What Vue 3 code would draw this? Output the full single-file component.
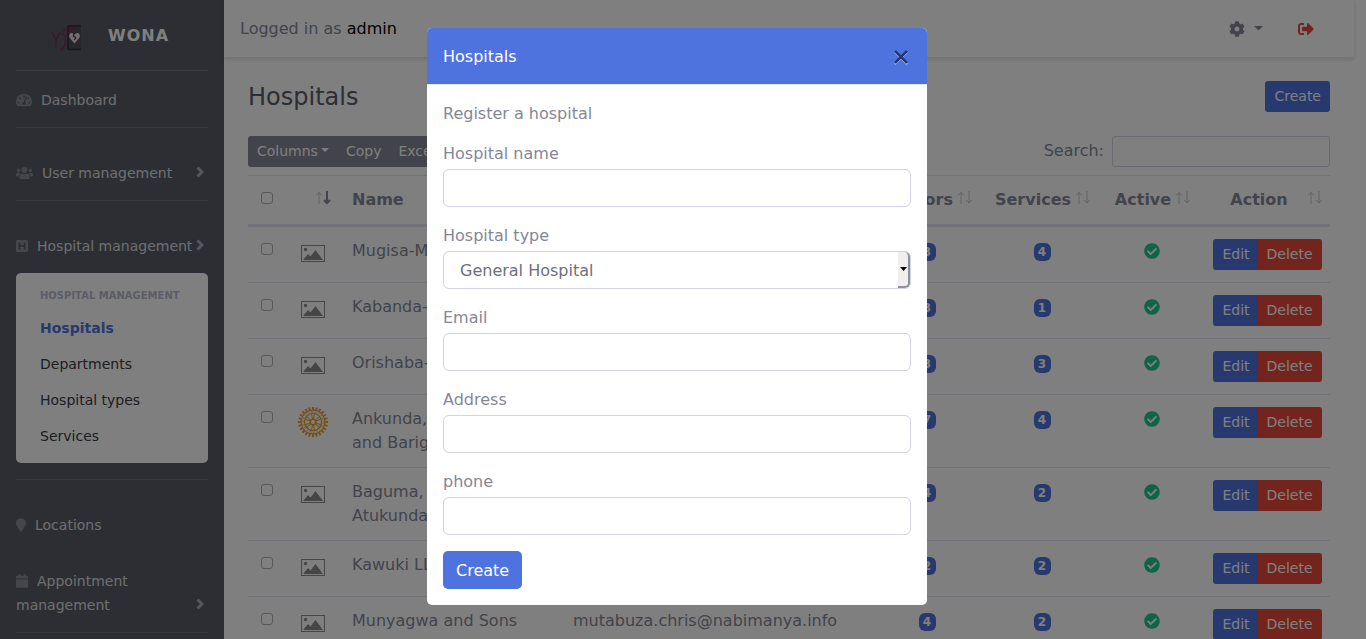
<script setup>
import { ref } from 'vue'

const icons = {
  dashboard: { box: '0 32 576 448', w: 16, d: 'M288 32C128.94 32 0 160.94 0 320c0 52.8 14.25 102.26 39.06 144.8 5.61 9.62 16.3 15.2 27.44 15.2h443c11.14 0 21.83-5.58 27.44-15.2C561.75 422.26 576 372.8 576 320c0-159.06-128.94-288-288-288zm0 64c14.71 0 26.58 10.13 30.32 23.65-1.11 2.26-2.64 4.23-3.45 6.67l-9.22 27.67c-5.13 3.49-10.97 6.01-17.64 6.01-17.67 0-32-14.33-32-32S270.33 96 288 96zM96 384c-17.67 0-32-14.33-32-32s14.33-32 32-32 32 14.33 32 32-14.33 32-32 32zm48-160c-17.67 0-32-14.33-32-32s14.33-32 32-32 32 14.33 32 32-14.33 32-32 32zm246.77-72.41l-61.33 184C343.13 347.33 352 364.54 352 384c0 11.72-3.38 22.55-8.88 32H232.88c-5.5-9.45-8.88-20.28-8.88-32 0-33.94 26.5-61.43 59.9-63.59l61.34-184.01c4.17-12.56 17.73-19.45 30.36-15.17 12.57 4.19 19.35 17.79 15.17 30.36zm14.66 57.2l15.52-46.55c3.47-1.29 7.13-2.23 11.05-2.23 17.67 0 32 14.33 32 32s-14.33 32-32 32c-11.38-.01-20.89-6.28-26.57-15.22zM480 384c-17.67 0-32-14.33-32-32s14.33-32 32-32 32 14.33 32 32-14.33 32-32 32z' },
  users: { box: '0 0 640 512', w: 17, d: 'M96 224c35.3 0 64-28.7 64-64s-28.7-64-64-64-64 28.7-64 64 28.7 64 64 64zm448 0c35.3 0 64-28.7 64-64s-28.7-64-64-64-64 28.7-64 64 28.7 64 64 64zm32 32h-64c-17.6 0-33.5 7.1-45.1 18.6 40.3 22.1 68.9 62 75.1 109.4h66c17.7 0 32-14.3 32-32v-32c0-35.3-28.7-64-64-64zm-256 0c61.9 0 112-50.1 112-112S381.9 32 320 32 208 82.1 208 144s50.1 112 112 112zm76.8 32h-8.3c-20.8 10-43.9 16-68.5 16s-47.6-6-68.5-16h-8.3C179.6 288 128 339.6 128 403.2V432c0 26.5 21.5 48 48 48h288c26.5 0 48-21.5 48-48v-28.8c0-63.6-51.6-115.2-115.2-115.2zm-223.7-13.4C161.5 263.1 145.6 256 128 256H64c-35.3 0-64 28.7-64 64v32c0 17.7 14.3 32 32 32h65.9c6.3-47.4 34.9-87.3 75.2-109.4z' },
  hospital: { box: '0 0 448 512', w: 12, d: 'M448 80v352c0 26.51-21.49 48-48 48H48c-26.51 0-48-21.49-48-48V80c0-26.51 21.49-48 48-48h352c26.51 0 48 21.49 48 48zm-112 48h-32c-8.837 0-16 7.163-16 16v80H160v-80c0-8.837-7.163-16-16-16h-32c-8.837 0-16 7.163-16 16v224c0 8.837 7.163 16 16 16h32c8.837 0 16-7.163 16-16v-80h128v80c0 8.837 7.163 16 16 16h32c8.837 0 16-7.163 16-16V144c0-8.837-7.163-16-16-16z' },
  marker: { box: '0 0 384 512', w: 10, d: 'M172.268 501.67C26.97 291.031 0 269.413 0 192 0 85.961 85.961 0 192 0s192 85.961 192 192c0 77.413-26.97 99.031-172.268 309.67-9.535 13.774-29.93 13.773-39.464 0z' },
  calendar: { box: '0 0 448 512', w: 12, d: 'M12 192h424c6.6 0 12 5.4 12 12v260c0 26.5-21.5 48-48 48H48c-26.5 0-48-21.5-48-48V204c0-6.6 5.4-12 12-12zm436-44v-36c0-26.5-21.5-48-48-48h-48V12c0-6.6-5.4-12-12-12h-40c-6.6 0-12 5.4-12 12v52H160V12c0-6.6-5.4-12-12-12h-40c-6.6 0-12 5.4-12 12v52H48c-26.5 0-48 21.5-48 48v36c0 6.6 5.4 12 12 12h424c6.6 0 12-5.4 12-12z' }
}

const menu = [
  { label: 'Dashboard', icon: icons.dashboard, ruled: true, tight: true },
  { label: 'User management', icon: icons.users, ruled: true, more: true },
  { label: 'Hospital management', icon: icons.hospital, ruled: true, more: true, open: true },
  { label: 'Locations', icon: icons.marker, ruled: true },
  { label: 'Appointment management', icon: icons.calendar, more: true }
]
const submenu = ['Hospitals', 'Departments', 'Hospital types', 'Services']

const rows = [
  { name: 'Mugisa-M', email: '', doctors: 3, services: 4 },
  { name: 'Kabanda-', email: '', doctors: 3, services: 1 },
  { name: 'Orishaba-', email: '', doctors: 3, services: 3 },
  { name: 'Ankunda,\nand Barig', email: '', doctors: 7, services: 4, wheel: true },
  { name: 'Baguma,\nAtukunda', email: '', doctors: 4, services: 2 },
  { name: 'Kawuki LL', email: '', doctors: 2, services: 2 },
  { name: 'Munyagwa and Sons', email: 'mutabuza.chris@nabimanya.info', doctors: 4, services: 2 }
]
const teeth = Array.from({ length: 24 }, (_, i) => i * 15)
const spokes = [0, 60, 120, 180, 240, 300]

const form = ref({ name: '', type: 'General Hospital', email: '', address: '', phone: '' })
const search = ref('')
</script>

<template>
  <div class="shell">
    <nav class="sidebar" aria-label="Main">
      <a class="brand" href="#">
        <svg class="logo" width="32" height="28" viewBox="0 0 32 28" aria-hidden="true">
          <rect x="16" y="1" width="13" height="25" rx="1" fill="#4c4e5a" />
          <path d="M16 2h13M16 25.500h13M16 2v23" fill="none" stroke="#30313a" stroke-width="1.600" />
          <g fill="none" stroke="#8a2457" stroke-width="1.300">
            <path d="M0 8l4 8 4-8M4 16v8" />
            <path d="M10 9q5 3 3 11-1 4-4 6" />
            <path d="M11 7q5-5 13-2" />
            <path d="M14 11q2-4 6-4" />
          </g>
          <path d="M22.500 19.500l-4.700-5.500q-1.500-3 .6-4.800 2.400-1 4.100 1.200 1.700-2.200 4.100-1.200 2.100 1.800.6 4.800z" fill="#dcdce2" />
          <path d="M22.500 9l-1.200 3 2.400 1.500-1.200 2.500" fill="none" stroke="#6a2a50" stroke-width="1.200" />
        </svg>
        <span>WONA</span>
      </a>
      <template v-for="item in menu" :key="item.label">
        <hr v-if="item.ruled" :class="{ spaced: !item.tight }">
        <a class="nav-link" href="#">
          <span class="nav-text"><svg class="nav-icon" :width="item.icon.w" height="14" :viewBox="item.icon.box" aria-hidden="true"><path :d="item.icon.d" /></svg>{{ item.label }}</span>
          <svg v-if="item.more" class="chevron" width="8" height="12" viewBox="0 0 8 12" aria-hidden="true"><path d="M1.500 1.500L6 6l-4.500 4.500" /></svg>
        </a>
        <div v-if="item.open" class="submenu">
          <h6>Hospital management</h6>
          <a v-for="(s, i) in submenu" :key="s" href="#" :class="{ active: i === 0 }">{{ s }}</a>
        </div>
      </template>
      <hr>
    </nav>

    <div class="content">
      <header class="topbar">
        <span>Logged in as <b>admin</b></span>
        <div class="top-actions">
          <button class="plain" type="button" aria-label="Settings">
            <svg width="16" height="16" viewBox="0 0 512 512" aria-hidden="true"><path fill="#858796" d="M487.4 315.7l-42.600-24.600c4.300-23.200 4.300-47 0-70.200l42.600-24.600c4.900-2.800 7.100-8.600 5.500-14-11.100-35.600-30-67.800-54.700-94.600-3.800-4.100-10-5.100-14.800-2.300L380.800 110c-17.900-15.400-38.500-27.300-60.800-35.100V25.800c0-5.600-3.900-10.500-9.400-11.700-36.700-8.200-74.300-7.800-109.200 0-5.500 1.200-9.400 6.100-9.400 11.700V75c-22.200 7.900-42.800 19.800-60.800 35.100L88.700 85.500c-4.900-2.800-11-1.900-14.800 2.300-24.700 26.700-43.600 58.900-54.700 94.600-1.700 5.400.6 11.200 5.500 14L67.300 221c-4.300 23.200-4.300 47 0 70.200l-42.600 24.600c-4.900 2.800-7.100 8.600-5.500 14 11.100 35.600 30 67.800 54.700 94.600 3.800 4.100 10 5.100 14.800 2.300l42.600-24.600c17.900 15.400 38.500 27.300 60.800 35.100v49.200c0 5.600 3.900 10.500 9.400 11.700 36.700 8.200 74.300 7.800 109.200 0 5.500-1.200 9.400-6.100 9.400-11.700v-49.200c22.200-7.900 42.800-19.800 60.800-35.100l42.600 24.600c4.900 2.800 11 1.900 14.800-2.300 24.700-26.700 43.600-58.900 54.700-94.600 1.500-5.500-.7-11.300-5.600-14.100zM256 336c-44.100 0-80-35.900-80-80s35.900-80 80-80 80 35.900 80 80-35.900 80-80 80z" /></svg>
            <svg width="9" height="5" viewBox="0 0 9 5" aria-hidden="true"><path fill="#858796" d="M0 0h9L4.500 4.500z" /></svg>
          </button>
          <a href="#" aria-label="Log out">
            <svg width="16" height="16" viewBox="0 0 512 512" aria-hidden="true"><path fill="#e74a3b" d="M497 273L329 441c-15 15-41 4.500-41-17v-96H152c-13.300 0-24-10.700-24-24v-96c0-13.300 10.700-24 24-24h136V88c0-21.400 25.900-32 41-17l168 168c9.300 9.400 9.300 24.600 0 34zM192 436v-40c0-6.600-5.400-12-12-12H96c-17.700 0-32-14.300-32-32V160c0-17.700 14.300-32 32-32h84c6.600 0 12-5.400 12-12V76c0-6.600-5.400-12-12-12H96c-53 0-96 43-96 96v192c0 53 43 96 96 96h84c6.600 0 12-5.400 12-12z" /></svg>
          </a>
        </div>
      </header>

      <main>
        <div class="page-head">
          <h1>Hospitals</h1>
          <button class="btn-sm primary" type="button">Create</button>
        </div>
        <div class="tools">
          <div class="group">
            <button class="btn-sm grey" type="button">Columns<svg class="caret" width="8" height="4" viewBox="0 0 8 4" aria-hidden="true"><path fill="#fff" d="M0 0h8L4 4z" /></svg></button>
            <button class="btn-sm grey" type="button">Copy</button>
            <button class="btn-sm grey" type="button">Excel</button>
          </div>
          <label class="search">Search:<input v-model="search" type="search"></label>
        </div>

        <table>
          <colgroup>
            <col class="c-check"><col class="c-img"><col class="c-name"><col><col class="c-doc"><col class="c-serv"><col class="c-act"><col class="c-btn">
          </colgroup>
          <thead>
            <tr>
              <th><input type="checkbox" aria-label="Select all"></th>
              <th class="sorted"><svg class="sort" width="16" height="14" viewBox="0 0 16 14" aria-label="Sort"><path class="up" d="M4 13V1.500M1 4.500l3-3 3 3" /><path class="down" d="M12 0v11.500M9 9l3 3 3-3" /></svg></th>
              <th class="left">Name</th>
              <th class="left">Email</th>
              <th v-for="h in ['Doctors', 'Services', 'Active']" :key="h" class="sortable">
                <span class="head">{{ h }}<svg class="sort" width="16" height="14" viewBox="0 0 16 14" aria-hidden="true"><path class="up" d="M4 13V1.500M1 4.500l3-3 3 3" /><path class="up" d="M12 0v11.500M9 9l3 3 3-3" /></svg></span>
              </th>
              <th class="action">
                <span class="head"><span>Action</span><svg class="sort" width="16" height="14" viewBox="0 0 16 14" aria-hidden="true"><path class="up" d="M4 13V1.500M1 4.500l3-3 3 3" /><path class="up" d="M12 0v11.500M9 9l3 3 3-3" /></svg></span>
              </th>
            </tr>
          </thead>
          <tbody>
            <tr v-for="r in rows" :key="r.name">
              <td><input type="checkbox" :aria-label="'Select ' + r.name"></td>
              <td class="pic">
                <svg v-if="r.wheel" width="30" height="30" viewBox="-15 -15 30 30" aria-hidden="true">
                  <g fill="#e8a034">
                    <rect v-for="t in teeth" :key="t" x="-1" y="-15" width="2" height="3" :transform="`rotate(${t})`" />
                  </g>
                  <g fill="none" stroke="#e8a034">
                    <circle r="11.800" stroke-width="1.200" />
                    <circle r="8.600" stroke-width="1.300" />
                    <circle r="2.800" stroke-width="1.600" />
                    <path v-for="s in spokes" :key="s" d="M-.5-3L-1.500-8.500M.5-3l1-5.500" stroke-width="1" :transform="`rotate(${s})`" />
                  </g>
                  <circle r="10.200" fill="none" stroke="#e8a034" stroke-width=".8" stroke-dasharray="2 1.500" />
                </svg>
                <svg v-else class="photo" width="24" height="17" viewBox="0 0 24 17" aria-hidden="true">
                  <rect x=".5" y=".5" width="23" height="16" fill="none" stroke="#8c8c8c" />
                  <circle cx="4.500" cy="4.500" r="1.700" fill="#8c8c8c" />
                  <path d="M2 15l5-6 2.500 2.500L14.500 5 22 15z" fill="#8c8c8c" />
                </svg>
              </td>
              <td class="left name">{{ r.name }}</td>
              <td class="left">{{ r.email }}</td>
              <td><span class="badge">{{ r.doctors }}</span></td>
              <td><span class="badge">{{ r.services }}</span></td>
              <td><svg class="check" width="16" height="16" viewBox="0 0 512 512" role="img" aria-label="Active"><path fill="#1cc88a" d="M504 256c0 136.967-111.033 248-248 248S8 392.967 8 256 119.033 8 256 8s248 111.033 248 248zM227.314 387.314l184-184c6.248-6.248 6.248-16.379 0-22.627l-22.627-22.627c-6.248-6.249-16.379-6.249-22.628 0L216 308.118l-70.059-70.059c-6.248-6.248-16.379-6.248-22.628 0l-22.627 22.627c-6.248 6.248-6.248 16.379 0 22.627l104 104c6.249 6.249 16.379 6.249 22.628.001z" /></svg></td>
              <td class="action">
                <div class="group">
                  <button class="btn-sm primary" type="button">Edit</button>
                  <button class="btn-sm danger" type="button">Delete</button>
                </div>
              </td>
            </tr>
          </tbody>
        </table>
      </main>
    </div>

    <div class="backdrop">
      <section class="modal" role="dialog" aria-labelledby="modal-title">
        <header class="modal-head">
          <h2 id="modal-title">Hospitals</h2>
          <button class="plain" type="button" aria-label="Close">
            <svg width="16" height="16" viewBox="0 0 16 16" aria-hidden="true"><path d="M2 3l12 12m0-12L2 15" stroke="#dfe7fb" stroke-width="1.800" /><path d="M2 2l12 12M14 2L2 14" stroke="#243a78" stroke-width="2.600" /></svg>
          </button>
        </header>
        <form class="modal-body" @submit.prevent>
          <p>Register a hospital</p>
          <div class="field"><label for="f-name">Hospital name</label><input id="f-name" v-model="form.name" type="text"></div>
          <div class="field">
            <label for="f-type">Hospital type</label>
            <div class="select">
              <select id="f-type" v-model="form.type"><option>General Hospital</option></select>
              <span class="drop"><svg width="7" height="4" viewBox="0 0 7 4" aria-hidden="true"><path d="M0 0h7L3.500 4z" /></svg></span>
            </div>
          </div>
          <div class="field"><label for="f-email">Email</label><input id="f-email" v-model="form.email" type="email"></div>
          <div class="field"><label for="f-address">Address</label><input id="f-address" v-model="form.address" type="text"></div>
          <div class="field"><label for="f-phone">phone</label><input id="f-phone" v-model="form.phone" type="text"></div>
          <button class="submit" type="submit">Create</button>
        </form>
      </section>
    </div>
  </div>
</template>

<style>
body { margin: 0; background: #fff; }
</style>

<style scoped>
* { box-sizing: border-box; }
.shell {
  display: flex;
  height: 100vh;
  overflow: hidden;
  padding-right: 12px;
  font: 16px/24px "DejaVu Sans", sans-serif;
  color: #858796;
}
button, input, select { font: inherit; color: inherit; }
button { cursor: pointer; }
a { text-decoration: none; }
.plain { display: flex; align-items: center; gap: 9px; padding: 0; border: 0; background: none; }

.sidebar { flex: 0 0 224px; background: #5a5c69; font-size: 14px; }
.brand {
  display: flex;
  align-items: center;
  height: 70px;
  padding: 2px 0 0 52px;
  gap: 24px;
  color: #fff;
  font-size: 16px;
  font-weight: 700;
  letter-spacing: 1px;
}
.logo { margin-top: 4px; }
hr { height: 1px; margin: 0 16px; border: 0; background: rgba(255, 255, 255, .15); }
hr.spaced { margin-bottom: 16px; }
.nav-link { display: flex; align-items: flex-end; padding: 17px 16px 15px; color: rgba(255, 255, 255, .8); }
.nav-text { flex: 1; }
.nav-icon { margin-right: 9px; vertical-align: -2px; fill: rgba(255, 255, 255, .3); }
.chevron { margin: 0 4px 7px 0; fill: none; stroke: rgba(255, 255, 255, .5); stroke-width: 3; }
.submenu { margin: 0 16px 16px; padding: 8px 8px 9px; border-radius: 5px; background: #fff; }
.submenu h6 { margin: 0; padding: 3px 16px 2px; font-size: 10px; font-weight: 700; color: #b7b9cc; text-transform: uppercase; white-space: nowrap; }
.submenu a { display: block; padding: 6px 16px; color: #3a3b45; }
.submenu a.active { color: #4e73df; font-weight: 700; }

.content { flex: 1; min-width: 0; }
.topbar {
  display: flex;
  align-items: center;
  justify-content: space-between;
  height: 57px;
  padding: 0 40px 0 16px;
  box-shadow: 0 2px 4px rgba(58, 59, 69, .18);
}
.topbar b { font-weight: 400; color: #000; }
.top-actions { display: flex; align-items: center; gap: 35px; }
.top-actions a { display: flex; }
main { padding: 24px 24px 0; }
.page-head, .tools { display: flex; align-items: flex-start; justify-content: space-between; }
.page-head { margin-bottom: 23px; }
h1 { margin: 0; padding-top: 1px; font-size: 24px; line-height: 31px; font-weight: 400; color: #5a5c69; }
.btn-sm { height: 31px; padding: 0 9px; border: 0; border-radius: 3px; font-size: 14px; line-height: 21px; color: #fff; }
.primary { background: #4e73df; }
.danger { background: #e74a3b; }
.grey { background: #858796; }
.caret { margin-left: 3px; vertical-align: 4px; }
.group { display: inline-flex; vertical-align: top; }
.group .btn-sm:not(:last-child) { border-top-right-radius: 0; border-bottom-right-radius: 0; }
.group .btn-sm:not(:first-child) { margin-left: -1px; border-top-left-radius: 0; border-bottom-left-radius: 0; }
.search { display: flex; align-items: flex-start; gap: 8px; line-height: 29px; }
.search input { width: 218px; height: 31px; border: 1px solid #d1d3e2; border-radius: 3px; background: #fff; }

table { width: 100%; margin-top: 8px; table-layout: fixed; border-collapse: separate; border-spacing: 0; }
.c-check { width: 38px; }
.c-img { width: 54px; }
.c-name { width: 221px; }
.c-doc { width: 116px; }
.c-serv { width: 114px; }
.c-act { width: 106px; }
.c-btn { width: 125px; }
th, td { padding: 12px 0; border-top: 1px solid #e3e6f0; text-align: center; vertical-align: top; }
th { border-bottom: 2px solid #e3e6f0; }
th.sortable { padding-left: 2px; }
.left { padding-left: 12px; padding-right: 12px; text-align: left; }
.name { white-space: pre-line; }
.action { padding-left: 8px; padding-right: 8px; }
th.action { padding-right: 7px; padding-left: 6px; }
th.sorted { text-align: right; padding-right: 9px; }
.head { display: inline-flex; gap: 4px; }
.action .head { display: flex; gap: 0; }
.action .head span { flex: 1; }
.sort { margin-top: 3px; fill: none; stroke-width: 1; }
.sort .up { stroke: #c3c4cc; }
.sort .down { stroke: #858796; stroke-width: 2; }
input[type="checkbox"] { appearance: none; width: 12px; height: 12px; margin: 4px 0 0; border: 1px solid #b0b0b0; border-radius: 3px; background: #fff; vertical-align: top; }
.pic { line-height: 0; }
.photo { margin-top: 6px; }
.badge { display: inline-block; min-width: 17px; padding: 0 4px; border-radius: 6px; background: #4e73df; color: #fff; font-size: 12px; line-height: 18px; font-weight: 700; }
.check { vertical-align: -3px; }

.backdrop { position: fixed; inset: 0; padding: 28px 12px 0 0; background: rgba(0, 0, 0, .5); }
.modal { width: 500px; margin: 0 auto; border-radius: 5px; overflow: hidden; background: #fff; }
.modal-head { display: flex; align-items: center; justify-content: space-between; padding: 17px 18px 15px 16px; border-bottom: 1px solid #e3e6f0; background: #4e73df; color: #fff; }
h2 { margin: 0; font-size: 16px; font-weight: 400; }
.modal-body { padding: 17px 16px 16px; }
p { margin: 0 0 16px; }
.field { margin-bottom: 17px; }
.field:last-of-type { margin-bottom: 16px; }
.field label { display: block; margin-bottom: 3px; }
.field input, .field select {
  display: block;
  width: 100%;
  height: 38px;
  padding: 6px 12px;
  border: 1px solid #d1d3e2;
  border-radius: 6px;
  background: #fff;
  color: #6e707e;
}
.select { position: relative; }
.field select { appearance: none; padding: 2px 16px 0; }
.drop {
  position: absolute;
  top: 1px;
  right: 1px;
  bottom: 1px;
  display: flex;
  align-items: center;
  justify-content: center;
  width: 12px;
  border-right: 2px solid #92909a;
  border-bottom: 2px solid #92909a;
  border-radius: 0 5px 5px 0;
  background: #f0efee;
  pointer-events: none;
}
.submit { display: block; height: 38px; padding: 2px 13px 0; border: 0; border-radius: 5px; background: #4e73df; color: #fff; }
</style>
